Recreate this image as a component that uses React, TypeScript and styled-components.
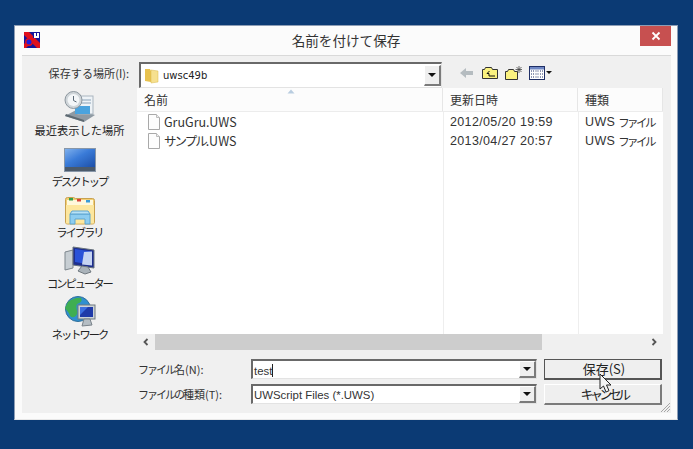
import React from "react";
import styled, { createGlobalStyle } from "styled-components";

const Global = createGlobalStyle`
  html, body { margin: 0; padding: 0; background: #0b3a74; }
  body { width: 693px; height: 449px; overflow: hidden; font-family: "Noto Sans CJK JP", "Liberation Sans", sans-serif; font-size: 12px; color: #222; }
  * { box-sizing: border-box; }
`;

const Desktop = styled.div`
  width: 693px;
  height: 449px;
  padding: 25px 15px 29px 14px;
  background: #0b3a74;
`;
const Window = styled.div`
  position: relative;
  height: 395px;
  background: #fbfbfb;
  border: 1px solid #8d9db5;
  border-bottom-color: #e8e8e8;
  display: flex;
  flex-direction: column;
  padding: 0 6px 6px 7px;
`;
const TitleBar = styled.div`
  height: 29px;
  flex: none;
  display: flex;
  align-items: flex-start;
`;
const AppIcon = styled.svg`
  width: 16px;
  height: 16px;
  margin: 6px 0 0 2px;
  flex: none;
`;
const Title = styled.div`
  flex: 1;
  text-align: center;
  font-size: 13.6px;
  line-height: 18px;
  padding: 5px 0 0 12px;
  color: #333;
`;
const CloseBtn = styled.div`
  width: 31px;
  height: 20px;
  flex: none;
  background: #c75050;
  display: flex;
  align-items: center;
  justify-content: center;
`;
const Panel = styled.div`
  flex: 1;
  min-height: 0;
  position: relative;
  background: #f0f0f0;
  border-top: 1px solid #d9d9d9;
  display: grid;
  grid-template-columns: 115px minmax(0, 1fr);
  grid-template-rows: 32px 262px 1fr;
`;
const LookLabel = styled.div`
  font-size: 11.1px;
  line-height: 16px;
  text-align: right;
  padding: 9px 0 0 0;
  margin-right: 8px;
  white-space: nowrap;
  color: #333;
`;
const TopRow = styled.div`
  display: flex;
  align-items: flex-start;
  padding: 6px 0 0 2px;
`;
const Combo = styled.div`
  width: 303px;
  height: 26px;
  flex: none;
  background: #fff;
  border-top: 2px solid #696969;
  border-left: 2px solid #696969;
  border-bottom: 1px solid #e3e3e3;
  border-right: 1px solid #e3e3e3;
  display: flex;
  align-items: center;
  padding-left: 3px;
  position: relative;
`;
const ComboText = styled.span`
  font-family: "DejaVu Sans", sans-serif;
  font-size: 10px;
  margin-left: 3px;
  color: #222;
  flex: 1;
`;
const DropBtn = styled.div<{ $h: number }>`
  width: 17px;
  height: ${(p) => p.$h}px;
  flex: none;
  background: #efefef;
  border-right: 2px solid #7b7b7b;
  border-bottom: 2px solid #7b7b7b;
  border-top: 1px solid #fff;
  border-left: 1px solid #fff;
  display: flex;
  align-items: center;
  justify-content: center;
  &::after {
    content: "";
    border-left: 4px solid transparent;
    border-right: 4px solid transparent;
    border-top: 4px solid #111;
  }
`;
const Tools = styled.div`
  display: flex;
  align-items: center;
  gap: 7px;
  margin: 3px 0 0 17px;
`;
const Sidebar = styled.div`
  display: flex;
  flex-direction: column;
  align-items: center;
  padding-top: 3px;
`;
const Place = styled.div`
  width: 114px;
  height: 51px;
  display: flex;
  flex-direction: column;
  align-items: center;
  font-size: 11.25px;
  line-height: 14px;
  color: #222;
  white-space: nowrap;
`;
const Kana = styled.span<{ $s?: number }>`
  letter-spacing: ${(p) => p.$s ?? -2}px;
`;
const ListPane = styled.div`
  min-width: 0;
  display: flex;
  flex-direction: column;
  margin-right: 8px;
  background: #fff;
`;
const HeaderRow = styled.div`
  display: grid;
  grid-template-columns: 306px 135px minmax(0, 1fr);
  height: 24px;
  background: #fcfcfc;
  border-bottom: 1px solid #ececec;
  position: relative;
`;
const HeaderCell = styled.div`
  padding: 3px 0 0 7px;
  font-size: 12px;
  line-height: 18px;
  color: #333;
  border-right: 1px solid #e6e6e6;
  &:last-child { border-right: 0; }
`;
const SortArrow = styled.svg`
  position: absolute;
  left: 150px;
  top: 1px;
`;
const Body = styled.div`
  flex: 1;
  min-height: 0;
  display: grid;
  grid-template-columns: 306px 135px minmax(0, 1fr);
  grid-auto-rows: 19px;
  align-content: start;
  background-image: linear-gradient(#eee, #eee), linear-gradient(#eee, #eee);
  background-size: 1px 100%, 1px 100%;
  background-position: 306px 0, 441px 0;
  background-repeat: no-repeat;
`;
const NameCell = styled.div`
  display: flex;
  align-items: center;
  padding-left: 9px;
  gap: 2px;
  font-size: 12.5px;
  color: #333;
`;
const Cell = styled.div`
  display: flex;
  align-items: center;
  gap: 3px;
  padding-left: 7px;
  font-family: "Liberation Sans", "Noto Sans CJK JP", sans-serif;
  font-size: 12.5px;
  letter-spacing: 0.35px;
  color: #333;
  white-space: nowrap;
  overflow: hidden;
`;
const TypeKana = styled.span`
  font-size: 11.5px;
  letter-spacing: -2.6px;
`;
const HScroll = styled.div`
  height: 16px;
  flex: none;
  display: flex;
  align-items: stretch;
  background: #f0f0f0;
`;
const ScrollBtn = styled.div`
  width: 18px;
  flex: none;
  display: flex;
  align-items: center;
  justify-content: center;
`;
const Thumb = styled.div`
  width: 387px;
  background: #cdcdcd;
`;
const Track = styled.div`
  flex: 1;
`;
const BottomRow = styled.div`
  grid-column: 1 / -1;
  display: grid;
  grid-template-columns: 106px 286px 118px;
  grid-template-rows: 21px 21px;
  row-gap: 4px;
  column-gap: 7px;
  padding: 9px 0 0 116px;
  align-items: start;
`;
const FieldLabel = styled.div`
  font-size: 11px;
  line-height: 20px;
  white-space: nowrap;
  color: #333;
`;
const Field = styled.div`
  height: 20px;
  background: #fff;
  border-top: 2px solid #696969;
  border-left: 2px solid #696969;
  border-bottom: 1px solid #e3e3e3;
  border-right: 1px solid #e3e3e3;
  display: flex;
  align-items: center;
  font-family: "Liberation Sans", sans-serif;
  font-size: 11.4px;
  color: #333;
  padding-left: 1px;
`;
const FieldText = styled.span`
  flex: 1;
  padding-top: 1px;
  white-space: nowrap;
`;
const Caret = styled.span`
  display: inline-block;
  width: 1px;
  height: 13px;
  background: #222;
  vertical-align: -2px;
`;
const Button = styled.div<{ $default?: boolean }>`
  width: 118px;
  height: 21px;
  padding-left: 3px;
  background: #efefef;
  border-top: 1px solid ${(p) => (p.$default ? "#555" : "#fff")};
  border-left: 1px solid ${(p) => (p.$default ? "#555" : "#fff")};
  border-right: 2px solid ${(p) => (p.$default ? "#555" : "#7b7b7b")};
  border-bottom: 2px solid ${(p) => (p.$default ? "#555" : "#7b7b7b")};
  display: flex;
  align-items: center;
  justify-content: center;
  font-size: 13px;
  line-height: 16px;
  color: #222;
`;
const Cursor = styled.svg`
  position: absolute;
  left: 584px;
  top: 347px;
`;
const Grip = styled.svg`
  position: absolute;
  right: 0;
  bottom: 0;
`;

const FileIcon = () => (
  <svg width="16" height="16" viewBox="0 0 16 16">
    <path d="M2.500 .5h8l3 3v12h-11z" fill="#fdfdfd" stroke="#a9a9a9" />
    <path d="M10.500 .5v3h3" fill="#eee" stroke="#bdbdbd" />
  </svg>
);

const RecentIcon = () => (
  <svg width="32" height="32" viewBox="0 0 32 32">
    <path d="M1 25l13-7 17 6-11 7z" fill="#8f9aa3" />
    <path d="M1 25l19 6v-2L2 23z" fill="#5e6a72" />
    <rect x="14" y="5" width="15" height="18" fill="#eef3f7" stroke="#aab5bf" />
    <rect x="11" y="15" width="15" height="8" fill="#4aa3de" />
    <path d="M16 9h11M16 12h11" stroke="#8ca3b8" />
    <circle cx="9.500" cy="9" r="8.500" fill="#cfd5d9" stroke="#8d979f" />
    <circle cx="9.500" cy="9" r="6" fill="#f3f6f8" />
    <path d="M9.500 5v4.500l3 1.500" fill="none" stroke="#5b6a77" />
  </svg>
);
const DesktopIcon = () => (
  <svg width="32" height="32" viewBox="0 0 32 32" style={{ marginTop: 3, marginBottom: -3 }}>
    <defs>
      <linearGradient id="screen" x1="0" y1="0" x2="1" y2="1">
        <stop offset="0" stopColor="#7fb0ec" />
        <stop offset=".45" stopColor="#3a7bd8" />
        <stop offset="1" stopColor="#1d4fa8" />
      </linearGradient>
    </defs>
    <rect x="0" y="3" width="32" height="24" fill="#8796a8" />
    <rect x="1" y="4" width="30" height="18" fill="url(#screen)" />
    <rect x="1" y="22" width="30" height="4" fill="#4b5a6b" />
  </svg>
);
const LibraryIcon = () => (
  <svg width="32" height="32" viewBox="0 0 32 32" style={{ marginTop: 1, marginBottom: -1 }}>
    <path d="M1.500 5.500q0-2 2-2h6l2 1h17q2 0 2 2v22q0 1.500-2 1.500h-25q-2 0-2-1.500z" fill="#f2cf74" stroke="#c9a14f" />
    <path d="M3 6h26v5H3z" fill="#fff8dc" />
    <rect x="5" y="4" width="4" height="2.500" fill="#33a04d" />
    <rect x="13" y="5" width="4" height="2.500" fill="#d8433a" />
    <rect x="22" y="6" width="4" height="2.500" fill="#3a9bd8" />
    <path d="M2 11h28v18q0 .5-1 .5H3q-1 0-1-.5z" fill="#fde79f" />
    <path d="M6 20h20v10h-5v-5H11v5H6z" fill="#8dcdf0" stroke="#5ea5cf" />
    <path d="M8 17h16l2 3H6z" fill="#b8e2f6" stroke="#5ea5cf" />
  </svg>
);
const ComputerIcon = () => (
  <svg width="32" height="32" viewBox="0 0 32 32">
    <path d="M1 8l8-2v18l-8 2z" fill="#c7ced3" stroke="#7e878e" />
    <path d="M9 3l21 3v18l-21-3z" fill="#1e2f8e" stroke="#6a747c" />
    <path d="M11 5l17 2.500-8 12L11 18z" fill="#2a52d8" />
    <path d="M20 8l8-.5v14l-10-1z" fill="#c6d4f2" />
    <path d="M14 27l4-5 6 1 3 5-6 2z" fill="#aab3ba" stroke="#6f787f" />
  </svg>
);
const NetworkIcon = () => (
  <svg width="32" height="32" viewBox="0 0 32 32" style={{ marginTop: 1, marginBottom: -1 }}>
    <circle cx="14" cy="13" r="12.500" fill="#2f8fd0" stroke="#2f6f9a" />
    <path d="M4 6c4-3 9-5 13-4 2 3-1 5-4 6-2 4 1 6 0 10-2 4-5 4-7 2-1-4-4-6-5-8z" fill="#3fae52" />
    <rect x="14" y="9" width="17" height="14" fill="#ccd3d8" stroke="#6f787f" />
    <rect x="16" y="11" width="13" height="10" fill="#1f3aa8" />
    <path d="M16 11h8l-8 8z" fill="#3b6ee0" />
    <path d="M20 23h6l2 6-10 1z" fill="#b5bdc3" stroke="#7a838a" />
  </svg>
);

export default function App() {
  return (
    <>
      <Global />
      <Desktop>
        <Window>
          <TitleBar>
            <AppIcon viewBox="0 0 16 16">
              <rect width="16" height="16" fill="#14149c" />
              <path d="M0 0h5l11 11v5h-3L0 3z" fill="#e0101c" />
              <path d="M0 16v-4l4-4 3 3-5 5z" fill="#e0101c" />
              <circle cx="5" cy="10" r="3.200" fill="#1c1ce0" stroke="#e0101c" strokeWidth="1.400" />
              <path d="M9 0h7v6H9z" fill="#14149c" />
              <path d="M10 1h2v3h1V1h2v5h-5z" fill="#fff" />
            </AppIcon>
            <Title>名前を付けて保存</Title>
            <CloseBtn>
              <svg width="10" height="10" viewBox="0 0 10 10">
                <path d="M1.500 1.500l7 7M8.500 1.500l-7 7" stroke="#fff" strokeWidth="1.800" />
              </svg>
            </CloseBtn>
          </TitleBar>
          <Panel>
            <LookLabel>保存する場所(I):</LookLabel>
            <TopRow>
              <Combo>
                <svg width="16" height="16" viewBox="0 0 16 16">
                  <path d="M1 1h5l1 2v11l-6-1z" fill="#e8c24f" />
                  <path d="M7 2l7 1v11l-7 1z" fill="#f6e08f" stroke="#d9b84e" strokeWidth=".5" />
                </svg>
                <ComboText>uwsc49b</ComboText>
                <DropBtn $h={21} />
              </Combo>
              <Tools>
                <svg width="16" height="14" viewBox="0 0 16 14">
                  <path d="M1 7l6-5v3h7v4H7v3z" fill="#b5bcc0" />
                </svg>
                <svg width="16" height="14" viewBox="0 0 16 14">
                  <path d="M.5 3.500h2l1-2h6l1 2h5v9H.5z" fill="#fbf27f" stroke="#333" />
                  <path d="M7.500 5l-2.500 2.500h2V10h6" fill="none" stroke="#111" />
                </svg>
                <svg width="17" height="15" viewBox="0 0 17 15">
                  <path d="M.5 6.500h2l1-2h5l1 2h3v8H.5z" fill="#fbf27f" stroke="#333" />
                  <path d="M14 1v7M10.500 4.500h7M11.500 2l5 5M16.500 2l-5 5" stroke="#444" strokeWidth=".8" />
                </svg>
                <svg width="23" height="14" viewBox="0 0 23 14">
                  <rect x=".5" y=".5" width="15" height="13" fill="#fff" stroke="#1f2f66" />
                  <rect x="1" y="1" width="14" height="2.500" fill="#6f87c4" />
                  <path d="M2 5h3M2 8h3M2 11h3M6.500 5h3M6.500 8h3M6.500 11h3M11 5h3M11 8h3M11 11h3" stroke="#1f2f66" strokeDasharray="1 1" />
                  <path d="M17 5h6l-3 3z" fill="#111" />
                </svg>
              </Tools>
            </TopRow>
            <Sidebar>
              <Place><RecentIcon />最近表示した場所</Place>
              <Place><DesktopIcon /><Kana>デスクトップ</Kana></Place>
              <Place><LibraryIcon /><Kana>ライブラリ</Kana></Place>
              <Place><ComputerIcon /><Kana>コンピューター</Kana></Place>
              <Place><NetworkIcon /><Kana>ネットワーク</Kana></Place>
            </Sidebar>
            <ListPane>
              <HeaderRow>
                <HeaderCell>名前</HeaderCell>
                <HeaderCell>更新日時</HeaderCell>
                <HeaderCell>種類</HeaderCell>
                <SortArrow width="8" height="5" viewBox="0 0 8 5"><path d="M4 .5L7.500 4.500H.5z" fill="#b9cde0" /></SortArrow>
              </HeaderRow>
              <Body>
                <NameCell><FileIcon /><span>GruGru.UWS</span></NameCell>
                <Cell>2012/05/20 19:59</Cell>
                <Cell>UWS<TypeKana>ファイル</TypeKana></Cell>
                <NameCell><FileIcon /><span><Kana>サンプル</Kana>.UWS</span></NameCell>
                <Cell>2013/04/27 20:57</Cell>
                <Cell>UWS<TypeKana>ファイル</TypeKana></Cell>
              </Body>
              <HScroll>
                <ScrollBtn>
                  <svg width="8" height="8" viewBox="0 0 8 8"><path d="M5.500 1L2.500 4l3 3" fill="none" stroke="#555" strokeWidth="1.800" /></svg>
                </ScrollBtn>
                <Thumb />
                <Track />
                <ScrollBtn>
                  <svg width="8" height="8" viewBox="0 0 8 8"><path d="M2.500 1l3 3-3 3" fill="none" stroke="#555" strokeWidth="1.800" /></svg>
                </ScrollBtn>
              </HScroll>
            </ListPane>
            <BottomRow>
              <FieldLabel><Kana>ファイル</Kana>名(N):</FieldLabel>
              <Field>
                <FieldText>test<Caret /></FieldText>
                <DropBtn $h={17} />
              </Field>
              <Button $default>保存(S)</Button>
              <FieldLabel><Kana>ファイルの</Kana>種類(T):</FieldLabel>
              <Field>
                <FieldText>UWScript Files (*.UWS)</FieldText>
                <DropBtn $h={17} />
              </Field>
              <Button><Kana $s={-3.6}>キャンセル</Kana></Button>
            </BottomRow>
            <Grip width="12" height="12" viewBox="0 0 12 12">
              <path d="M11 2L2 11M11 5l-6 6M11 8l-3 3" stroke="#a6a6a6" />
            </Grip>
          </Panel>
          <Cursor width="14" height="21" viewBox="0 0 14 21">
            <path d="M1 1v15l3.500-3 2.500 6 3-1.300-2.500-5.700H12z" fill="#f4f4f4" stroke="#222" />
          </Cursor>
        </Window>
      </Desktop>
    </>
  );
}
